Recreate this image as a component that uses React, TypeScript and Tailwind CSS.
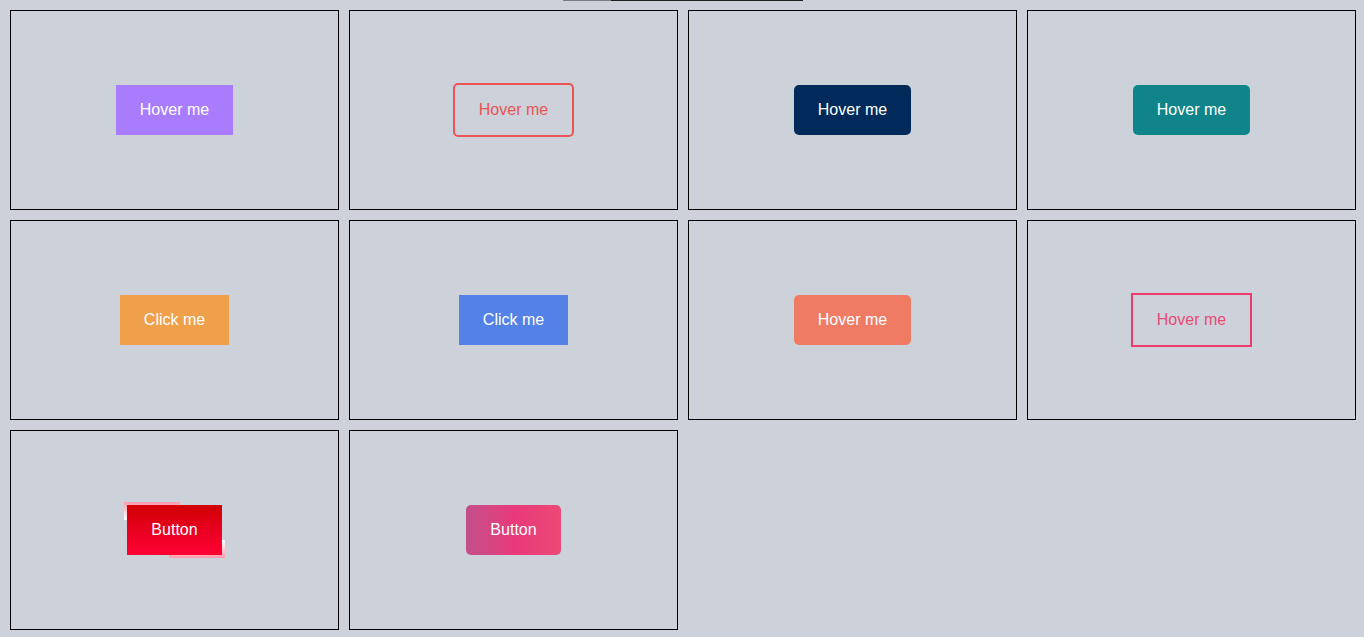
const base = "font-['Liberation_Sans',Arial,sans-serif] text-base leading-[18px]";

function Card({ children }: { children?: React.ReactNode }) {
  return (
    <div className="h-[200px] border border-black flex items-center justify-center">
      {children}
    </div>
  );
}

export default function App() {
  return (
    <div className={`min-h-[637px] bg-[#cdd1d9] ${base}`}>
      {/* top strip */}
      <div className="flex justify-center">
        <div className="flex h-px w-[240px] ml-[2px]">
          <div className="w-[48px] bg-[#7a7c80]" />
          <div className="flex-1 bg-[#1f1f1f]" />
        </div>
      </div>

      <div className="mt-[9px] ml-[10px] grid grid-cols-[repeat(4,329px)] gap-[10px]">
        <Card>
          <button className="bg-[#a97bfd] text-white px-6 py-4">Hover me</button>
        </Card>
        <Card>
          <button className="border-2 border-[#ea5454] text-[#ea5454] rounded-[5px] px-6 py-4">Hover me</button>
        </Card>
        <Card>
          <button className="bg-[#012a5a] text-white rounded-[5px] px-6 py-4">Hover me</button>
        </Card>
        <Card>
          <button className="bg-[#0f8489] text-white rounded-[5px] px-6 py-4">Hover me</button>
        </Card>

        <Card>
          <button className="bg-[#f0a04b] text-white px-6 py-4">Click me</button>
        </Card>
        <Card>
          <button className="bg-[#5481e6] text-white px-6 py-4">Click me</button>
        </Card>
        <Card>
          <button className="bg-[#f07b65] text-white rounded-[5px] px-6 py-4">Hover me</button>
        </Card>
        <Card>
          <button className="border-2 border-[#ec3c6b] text-[#e94a78] px-6 py-4">Hover me</button>
        </Card>

        <Card>
          <div className="relative">
            <span className="absolute -left-[3px] -top-[3px] w-[56px] h-[18px] bg-gradient-to-t from-white to-[#ff9aad]" />
            <span className="absolute -right-[3px] -bottom-[3px] w-[56px] h-[18px] bg-gradient-to-b from-white to-[#ff9aad]" />
            <button className="relative bg-gradient-to-b from-[#d10000] to-[#ff0033] text-white px-6 py-4">Button</button>
          </div>
        </Card>
        <Card>
          <button className="bg-gradient-to-r from-[#c24e8b] via-[#e8397a] to-[#ed4877] text-white rounded-[5px] px-6 py-4">Button</button>
        </Card>
      </div>
    </div>
  );
}
